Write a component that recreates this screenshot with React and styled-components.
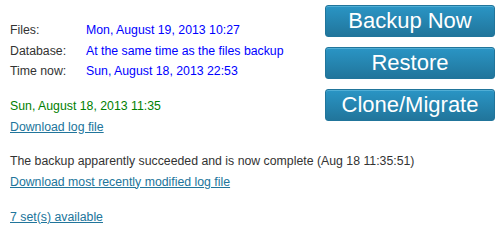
import React from "react";
import styled, { createGlobalStyle } from "styled-components";

const Global = createGlobalStyle`
  html, body { margin: 0; padding: 0; background: #fff; }
  body { font-family: "Liberation Sans", Arial, sans-serif; font-size: 12.3px; color: #333; }
`;

const Page = styled.div`
  padding: 5px 5px 0 10px;
  width: 500px;
  box-sizing: border-box;
`;

const Buttons = styled.div`
  float: right;
  display: flex;
  flex-direction: column;
  gap: 10px;
`;

const Left = styled.div`
  display: flex;
  flex-direction: column;
  padding-top: 18px;
`;

const InfoGrid = styled.div`
  display: grid;
  grid-template-columns: 76px auto;
  row-gap: 5px;
  line-height: 15.5px;
  align-self: flex-start;
`;

const Label = styled.span`
  color: #333;
`;

const Value = styled.span`
  color: #0000ff;
`;

const Block = styled.div`
  display: flex;
  flex-direction: column;
  gap: 5px;
  line-height: 16px;
  margin-top: ${(p) => p.$mt}px;
`;

const Success = styled.span`
  color: #008000;
  align-self: flex-start;
`;

const Text = styled.span`
  white-space: nowrap;
`;

const Link = styled.a`
  color: #21759b;
  text-decoration: underline;
  align-self: flex-start;
`;

const Button = styled.button`
  width: 170px;
  height: 32px;
  padding: 0;
  border: 1px solid #21759b;
  border-radius: 3px;
  background: linear-gradient(to bottom, #2a95c5, #21759b);
  color: #fff;
  font-family: "Liberation Sans", Arial, sans-serif;
  font-size: 22px;
  line-height: 30px;
  text-align: center;
  box-shadow: inset 0 1px 0 rgba(120, 200, 230, 0.5);
  cursor: pointer;
`;

export default function App() {
  return (
    <>
      <Global />
      <Page>
        <Buttons>
          <Button>Backup Now</Button>
          <Button>Restore</Button>
          <Button>Clone/Migrate</Button>
        </Buttons>
        <Left>
          <InfoGrid>
            <Label>Files:</Label>
            <Value>Mon, August 19, 2013 10:27</Value>
            <Label>Database:</Label>
            <Value>At the same time as the files backup</Value>
            <Label>Time now:</Label>
            <Value>Sun, August 18, 2013 22:53</Value>
          </InfoGrid>
          <Block $mt={18}>
            <Success>Sun, August 18, 2013 11:35</Success>
            <Link href="#">Download log file</Link>
          </Block>
          <Block $mt={18}>
            <Text>The backup apparently succeeded and is now complete (Aug 18 11:35:51)</Text>
            <Link href="#">Download most recently modified log file</Link>
          </Block>
          <Block $mt={19}>
            <Link href="#">7 set(s) available</Link>
          </Block>
        </Left>
      </Page>
    </>
  );
}
